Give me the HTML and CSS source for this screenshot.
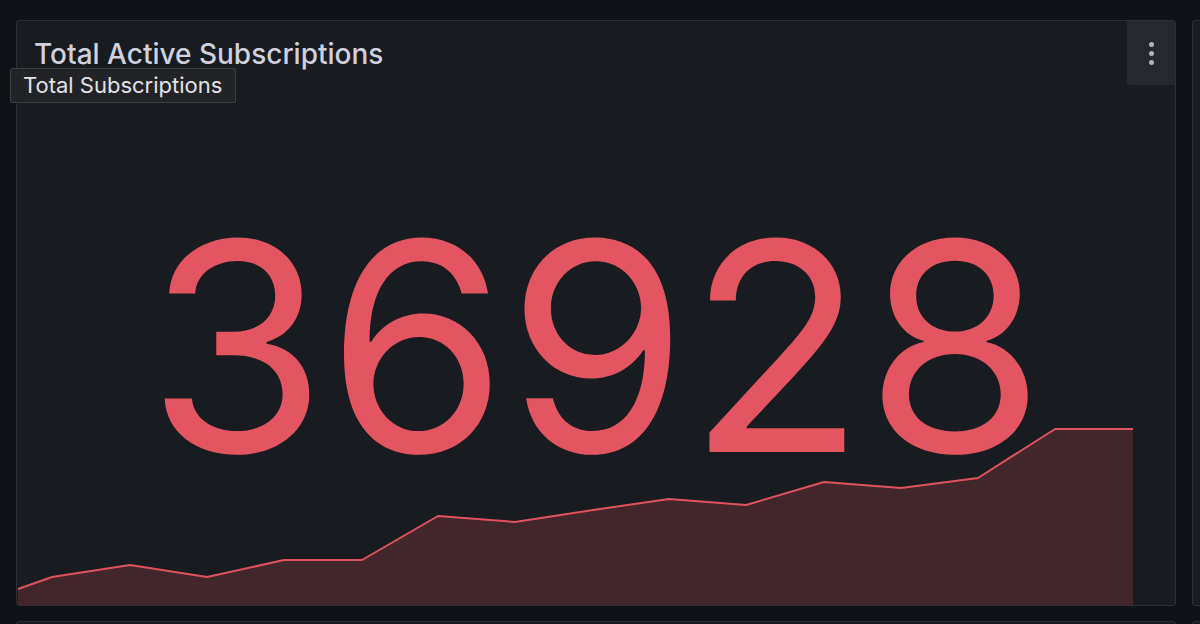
FILE: index.html
```html
<!DOCTYPE html>
<html lang="en">
<head>
    <meta charset="UTF-8">
    <meta name="viewport" content="width=device-width, initial-scale=1.0">
    <title>Total Active Subscriptions</title>
    <link rel="stylesheet" href="styles.css">
</head>
<body>
    <div class="dashboard">
        <!-- Stat panel -->
        <section class="panel">
            <header class="panel-header">
                <h2 class="panel-title">Total Active Subscriptions</h2>
                <button class="panel-menu" aria-label="Menu">
                    <span class="dot"></span>
                    <span class="dot"></span>
                    <span class="dot"></span>
                </button>
            </header>
            <div class="tooltip">Total Subscriptions</div>
            <div class="panel-body">
                <div class="stat-value">36928</div>
                <svg class="sparkline" viewBox="17 420 1158 185" preserveAspectRatio="none">
                    <path class="spark-fill" d="M18 589 L52 577 L130 565 L207 577 L284 560 L362 560 L438 516 L515 522 L593 510 L669 499 L746 505 L824 482 L901 488 L978 478 L1055 429 L1133 429 L1133 605 L18 605 Z"/>
                    <polyline class="spark-line" points="18,589 52,577 130,565 207,577 284,560 362,560 438,516 515,522 593,510 669,499 746,505 824,482 901,488 978,478 1055,429 1133,429"/>
                </svg>
            </div>
        </section>

        <section class="panel"></section>
        <section class="panel"></section>
        <section class="panel"></section>
    </div>
</body>
</html>
```

FILE: styles.css
```css
/* General Styles */
body {
    margin: 0;
    padding: 0;
    background: #111217;
    font-family: Inter, "Noto Sans", sans-serif;
    overflow: hidden;
}

.dashboard {
    display: grid;
    grid-template-columns: 1160px 1160px;
    grid-template-rows: 586px 586px;
    gap: 15px 16px;
    padding: 20px 0 0 16px;
}

.panel {
    position: relative;
    display: flex;
    flex-direction: column;
    background: #181b1f;
    border: 1px solid #2f3035;
    border-radius: 3px;
    box-sizing: border-box;
}

.panel-header {
    display: flex;
    justify-content: space-between;
    align-items: flex-start;
    height: 64px;
}

.panel-title {
    margin: 16px 0 0 17px;
    font-size: 28px;
    font-weight: 500;
    line-height: 34px;
    color: #d0d0de;
}

.panel-menu {
    display: flex;
    flex-direction: column;
    align-items: center;
    justify-content: center;
    gap: 4px;
    width: 48px;
    height: 64px;
    background: #26282d;
    border: none;
    border-radius: 0 2px 0 2px;
    padding: 0;
}

.dot {
    width: 5px;
    height: 5px;
    border-radius: 50%;
    background: #b2b4bb;
}

/* Hover tooltip over the title */
.tooltip {
    position: absolute;
    top: 47px;
    left: -7px;
    padding: 4px 13px 5px 12px;
    background: #222327;
    border: 1px solid #3c3d42;
    border-radius: 2px;
    color: #e2e2e8;
    font-size: 22px;
    line-height: 24px;
    z-index: 2;
}

.panel-body {
    position: relative;
    flex: 1;
    display: flex;
    align-items: center;
    justify-content: center;
}

.stat-value {
    position: relative;
    z-index: 1;
    margin-top: 2px;
    font-size: 291px;
    font-weight: 400;
    line-height: 1;
    color: #e25561;
}

.sparkline {
    position: absolute;
    left: 0;
    bottom: 0;
    width: 1158px;
    height: 185px;
}

.spark-fill {
    fill: #43262b;
}

.spark-line {
    fill: none;
    stroke: #e0525e;
    stroke-width: 2;
    stroke-linejoin: round;
}
```
